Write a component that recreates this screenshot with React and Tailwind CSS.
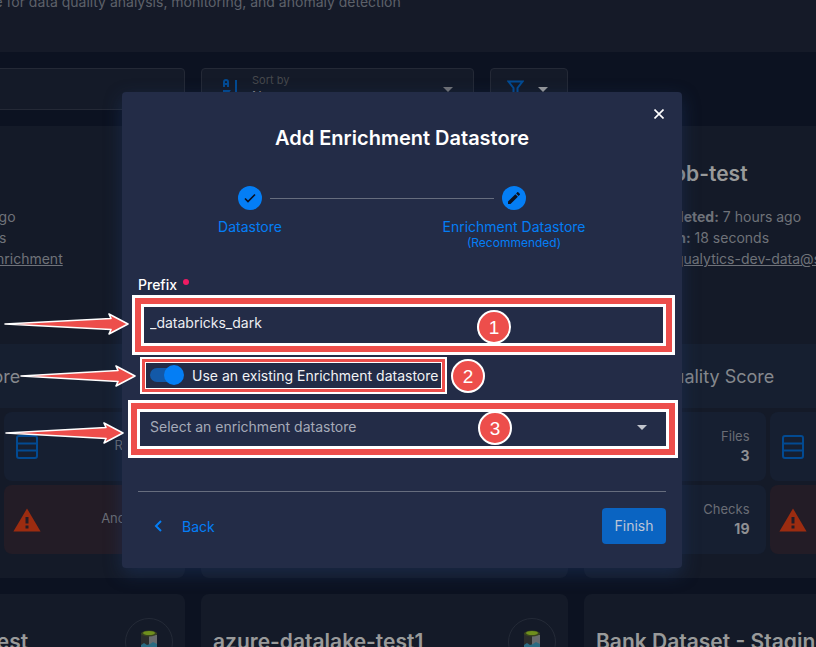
import React from "react";

function StackIcon() {
  return (
    <svg width="24" height="24" viewBox="0 0 24 24" fill="none" stroke="#024a92" strokeWidth="2" aria-hidden="true">
      <rect x="2" y="1" width="20" height="22" rx="2" />
      <path d="M2 8.500h20M2 15.500h20" />
    </svg>
  );
}

function AlertIcon() {
  return (
    <svg width="28" height="24" viewBox="0 0 28 24" aria-hidden="true">
      <path d="M14 0.500L27.600 23.500H0.400z" fill="#9c2c10" />
      <path d="M12.500 9h3v6.500h-3zM12.500 17.500h3v3h-3z" fill="#231c26" />
    </svg>
  );
}

function LakeIcon() {
  return (
    <svg width="20" height="24" viewBox="0 0 20 24" aria-hidden="true">
      <path d="M2 3v18c0 3 16 3 16 0V3z" fill="#2b2d2c" />
      <path d="M10 5h8v16c0 1.500-4 2-8 2z" fill="#686b6e" />
      <path d="M2 15l3-2 3 2 3-1 3-2 4 2v7c0 3-16 3-16 0z" fill="#2a6b82" />
      <ellipse cx="10" cy="3.500" rx="8" ry="3" fill="#39441f" />
      <ellipse cx="10" cy="3" rx="6" ry="2" fill="#6f8f1d" />
    </svg>
  );
}

function Tile({ label, value, alert }) {
  return (
    <div
      className={
        "flex h-[69px] items-center justify-between rounded-lg pl-[9px] pr-4 " +
        (alert ? "bg-[#231c26]" : "bg-[#161f31]")
      }
    >
      <span className={alert ? "" : "px-[2px]"}>{alert ? <AlertIcon /> : <StackIcon />}</span>
      <div className="pb-[2px] text-right leading-[19px]">
        <div className="text-[13px] text-[#6a6d75]">{label}</div>
        <div className="text-[14px] font-bold text-[#8f9093]">{value}</div>
      </div>
    </div>
  );
}

function Card({ name, rows, pad, scorePad }) {
  return (
    <article className="h-[452px] min-w-0 rounded-lg bg-[#141a28]">
      <div className="flex h-[72px] items-end justify-between px-3">
        <h2 className="h-[38px] whitespace-nowrap text-[21px] font-semibold leading-[28px] text-[#999a9a]">{name}</h2>
        <span className="flex h-12 w-12 shrink-0 items-center justify-center rounded-full border border-[#242a37]">
          <LakeIcon />
        </span>
      </div>
      <dl className={"h-[146px] whitespace-nowrap pt-2 text-[14px] leading-[21px] text-[#6f7279] " + pad}>
        {rows.map(([term, text, linked]) => (
          <div key={term} className="flex gap-1">
            <dt className="font-bold">{term}</dt>
            <dd className={linked ? "underline" : ""}>{text}</dd>
          </div>
        ))}
      </dl>
      <div className={"flex h-16 items-center bg-[#161f30] text-[18px] text-[#85888d] " + scorePad}>Quality Score</div>
      <div className="grid grid-cols-2 gap-1 p-1">
        <Tile label="Files" value="3" />
        <Tile label="Records" value="" />
        <Tile label="Checks" value="19" />
        <Tile label="Anomalies" value="" alert />
      </div>
    </article>
  );
}

const cards = [
  {
    name: "databricks-test",
    pad: "pl-[35px]",
    scorePad: "pl-[88px]",
    rows: [["Completed:", "an hour ago"], ["Completion:", "1 seconds"], ["Location:", "dark_test_enrichment", true]],
  },
  {
    name: "consolidated",
    pad: "pl-[23px]",
    scorePad: "pl-[76px]",
    rows: [["Last Completed:", "1 day ago"], ["Completion:", "5 seconds"], ["Location:", "main", true]],
  },
  {
    name: "adcs-blob-test",
    pad: "pl-[23px]",
    scorePad: "pl-[76px]",
    rows: [["Last Completed:", "7 hours ago"], ["Completion:", "18 seconds"], ["Location:", "qualytics-dev-data@storage", true]],
  },
  { name: "azure-datatest-test", pad: "pl-3", scorePad: "pl-3", rows: [] },
  { name: "azure-datalake-test1", pad: "pl-3", scorePad: "pl-3", rows: [] },
  { name: "Bank Dataset - Staging", pad: "pl-3", scorePad: "pl-3", rows: [] },
];

function Backdrop() {
  return (
    <div>
      <header className="flow-root h-[52px] bg-[#151a28]">
        <p className="-ml-[203px] -mt-2 whitespace-nowrap text-[14px] leading-5 text-[#5d616a]">
          Connect your enrichment store for data quality analysis, monitoring, and anomaly detection
        </p>
      </header>
      <div className="-ml-[182px] -mr-[135px] grid grid-cols-3 gap-4 pt-4">
        <input
          aria-label="Search"
          className="h-[42px] min-w-0 rounded border border-[#242936] bg-[#141a28] px-3"
        />
        <div className="flex gap-4">
          <button className="flex h-[42px] flex-1 items-center rounded border border-[#242936] bg-[#141a28] px-5 text-left">
            <svg width="18" height="20" viewBox="0 0 18 20" fill="none" stroke="#024a92" strokeWidth="2" aria-hidden="true">
              <path d="M2 8V3q0-2 2-2q2 0 2 2v5M2 5h4M1 12h6l-5 7h6M14 1v17M11 15l3 3 3-3" />
            </svg>
            <span className="ml-3 flex-1 pb-[2px] text-[#85878b]">
              <span className="block text-[11px] leading-4 text-[#46484c]">Sort by</span>
              <span className="block text-[13px] leading-4">Name</span>
            </span>
            <svg width="10" height="5" viewBox="0 0 10 5" aria-hidden="true">
              <path d="M0 0h10L5 5z" fill="#717276" />
            </svg>
          </button>
          <button
            aria-label="Filter"
            className="flex h-[42px] w-[78px] items-center gap-[14px] rounded border border-[#242936] bg-[#141a28] px-4"
          >
            <svg width="17" height="19" viewBox="0 0 17 19" fill="none" stroke="#024a92" strokeWidth="2" aria-hidden="true">
              <path d="M1.500 1.500h14l-5 6.500v9.500h-4V8z" />
            </svg>
            <svg width="10" height="5" viewBox="0 0 10 5" aria-hidden="true">
              <path d="M0 0h10L5 5z" fill="#999a9c" />
            </svg>
          </button>
        </div>
        <span />
        {cards.map((card) => (
          <Card key={card.name} {...card} />
        ))}
      </div>
    </div>
  );
}

function Frame({ place, thin }) {
  return (
    <div className={"pointer-events-none absolute border-white " + (thin ? "border-2 " : "border-[3px] ") + place}>
      <div className={"h-full border-[#ed4e4b] " + (thin ? "border-[3px]" : "border-[6px]")}>
        <div className={"h-full border-white " + (thin ? "border" : "border-[3px]")} />
      </div>
    </div>
  );
}

function Badge({ place, children }) {
  return (
    <span
      className={
        "pointer-events-none absolute flex h-[34px] w-[34px] items-center justify-center rounded-full border-2 border-white bg-[#ed4e4b] font-['Liberation_Sans',sans-serif] text-[19px] leading-none text-white " +
        place
      }
    >
      {children}
    </span>
  );
}

function Arrow({ place, width }) {
  const neck = width - 18;
  return (
    <svg
      className={"pointer-events-none absolute " + place}
      width={width}
      height="24"
      viewBox={`0 0 ${width} 24`}
      aria-hidden="true"
    >
      <path
        d={`M1 12L${neck} 6.500L${neck - 2} 2L${width - 1} 12L${neck - 2} 22L${neck} 17.500Z`}
        fill="#ed4e4b"
        stroke="#fff"
        strokeWidth="1.600"
        strokeLinejoin="round"
      />
    </svg>
  );
}

function Stepper() {
  return (
    <ol className="-ml-5 mr-5 mt-[34px] grid h-16 grid-cols-2 text-center text-[14px] leading-[18px] text-[#047ef5]">
      <li>
        <div className="flex items-center gap-2">
          <span className="flex-1" />
          <span className="flex h-6 w-6 items-center justify-center rounded-full bg-[#047ef5]">
            <svg width="12" height="10" viewBox="0 0 12 10" fill="none" stroke="#0c1221" strokeWidth="1.700" aria-hidden="true">
              <path d="M1 5.500L4 8.500L11 1.500" />
            </svg>
          </span>
          <span className="h-px flex-1 bg-[#666d7e]" />
        </div>
        <div className="mt-2">Datastore</div>
      </li>
      <li>
        <div className="flex items-center gap-2">
          <span className="h-px flex-1 bg-[#666d7e]" />
          <span className="flex h-6 w-6 items-center justify-center rounded-full bg-[#047ef5]">
            <svg width="12" height="12" viewBox="3 3 18 18" fill="#0c1221" aria-hidden="true">
              <path d="M3 17.250V21h3.750L17.810 9.940l-3.750-3.750L3 17.250zM20.710 7.040a1 1 0 0 0 0-1.410l-2.340-2.340a1 1 0 0 0-1.410 0l-1.830 1.830 3.750 3.750 1.830-1.830z" />
            </svg>
          </span>
          <span className="flex-1" />
        </div>
        <div className="mt-2">Enrichment Datastore</div>
        <div className="text-[12px] leading-[14px]">(Recommended)</div>
      </li>
    </ol>
  );
}

export default function App() {
  return (
    <div className="relative h-screen overflow-hidden bg-[#0c1221] font-['Inter','Noto_Sans',sans-serif]">
      <Backdrop />
      <div className="absolute inset-0 flex items-start justify-center pr-3 pt-[92px]">
        <section
          role="dialog"
          aria-labelledby="dialog-title"
          className="relative w-full max-w-[560px] rounded bg-[#232c47] px-4 pb-6 shadow-[0_6px_18px_rgba(32,60,108,0.45)]"
        >
          <button aria-label="Close" className="absolute right-[15px] top-[14px] flex h-4 w-4 items-center justify-center">
            <svg width="10" height="10" viewBox="0 0 10 10" stroke="#fff" strokeWidth="1.600" aria-hidden="true">
              <path d="M0.500 0.500l9 9M9.500 0.500l-9 9" />
            </svg>
          </button>
          <h1 id="dialog-title" className="pt-8 text-center text-[20px] font-semibold leading-7 text-white">
            Add Enrichment Datastore
          </h1>
          <Stepper />
          <label htmlFor="prefix" className="mt-[25px] flex gap-[6px] text-[14px] font-medium leading-5 text-white">
            Prefix
            <span className="mt-1 h-[6px] w-[6px] rounded-full bg-[#ee1b63]" />
          </label>
          <input
            id="prefix"
            defaultValue="_databricks_dark"
            className="mt-2 block h-10 w-full bg-transparent px-3 pb-[2px] text-[14px] text-[#eceef2] outline-none"
          />
          <div className="mt-[22px] flex h-5 items-center gap-2 pl-3">
            <input
              id="existing"
              type="checkbox"
              role="switch"
              defaultChecked
              className="flex h-5 w-[34px] appearance-none items-center before:h-[14px] before:w-7 before:rounded-full before:bg-[#1359a8] after:-ml-[14px] after:h-5 after:w-5 after:rounded-full after:bg-[#047ef5]"
            />
            <label htmlFor="existing" className="whitespace-nowrap pt-[2px] text-[14px] leading-5 text-[#f2f3f5]">
              Use an existing Enrichment datastore
            </label>
          </div>
          <div className="relative mt-[22px]">
            <select
              aria-label="Enrichment datastore"
              className="block h-10 w-full appearance-none bg-transparent px-3 pb-[2px] text-[14px] text-[#a5aab8] outline-none"
            >
              <option>Select an enrichment datastore</option>
            </select>
            <svg className="pointer-events-none absolute right-[19px] top-[18px]" width="10" height="5" viewBox="0 0 10 5" aria-hidden="true">
              <path d="M0 0h10L5 5z" fill="#c2c5ce" />
            </svg>
          </div>
          <footer className="mt-11 flex items-center justify-between border-t border-[#666d7e] pt-4">
            <button className="flex h-9 items-center gap-5 pl-4 text-[14px] text-[#047ef5]">
              <svg width="8" height="12" viewBox="0 0 8 12" fill="none" stroke="#047ef5" strokeWidth="2" aria-hidden="true">
                <path d="M7 1L2 6l5 5" />
              </svg>
              Back
            </button>
            <button className="h-9 w-16 rounded-sm bg-[#0a64c2] pb-[2px] text-[14px] text-[#bcc5d6]">Finish</button>
          </footer>

          <Frame place="left-[10px] right-[7px] top-[203px] h-[60px]" />
          <Frame place="left-[18px] top-[265px] h-[37px] w-[307px]" thin />
          <Frame place="left-[6px] right-1 top-[308px] h-[58px]" />
          <Badge place="left-[355px] top-[218px]">1</Badge>
          <Badge place="left-[329px] top-[267px]">2</Badge>
          <Badge place="left-[356px] top-[319px]">3</Badge>
          <Arrow place="-left-[118px] top-[220px]" width={125} />
          <Arrow place="-left-[102px] top-[272px]" width={116} />
          <Arrow place="-left-[117px] top-[329px]" width={119} />
        </section>
      </div>
    </div>
  );
}
